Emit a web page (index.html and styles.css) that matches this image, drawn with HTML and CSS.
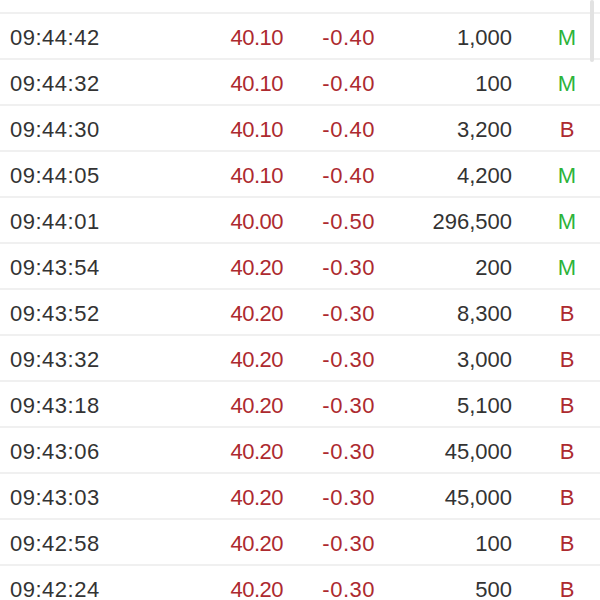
FILE: index.html
```html
<!DOCTYPE html>
<html>
<head>
<meta charset="utf-8">
<link rel="stylesheet" href="styles.css">
</head>
<body>
<div class="list">
  <div class="spacer"></div>
  <div class="row"><span class="time">09:44:42</span><span class="price">40.10</span><span class="chg">-0.40</span><span class="vol">1,000</span><span class="type m">M</span></div>
  <div class="row"><span class="time">09:44:32</span><span class="price">40.10</span><span class="chg">-0.40</span><span class="vol">100</span><span class="type m">M</span></div>
  <div class="row"><span class="time">09:44:30</span><span class="price">40.10</span><span class="chg">-0.40</span><span class="vol">3,200</span><span class="type b">B</span></div>
  <div class="row"><span class="time">09:44:05</span><span class="price">40.10</span><span class="chg">-0.40</span><span class="vol">4,200</span><span class="type m">M</span></div>
  <div class="row"><span class="time">09:44:01</span><span class="price">40.00</span><span class="chg">-0.50</span><span class="vol">296,500</span><span class="type m">M</span></div>
  <div class="row"><span class="time">09:43:54</span><span class="price">40.20</span><span class="chg">-0.30</span><span class="vol">200</span><span class="type m">M</span></div>
  <div class="row"><span class="time">09:43:52</span><span class="price">40.20</span><span class="chg">-0.30</span><span class="vol">8,300</span><span class="type b">B</span></div>
  <div class="row"><span class="time">09:43:32</span><span class="price">40.20</span><span class="chg">-0.30</span><span class="vol">3,000</span><span class="type b">B</span></div>
  <div class="row"><span class="time">09:43:18</span><span class="price">40.20</span><span class="chg">-0.30</span><span class="vol">5,100</span><span class="type b">B</span></div>
  <div class="row"><span class="time">09:43:06</span><span class="price">40.20</span><span class="chg">-0.30</span><span class="vol">45,000</span><span class="type b">B</span></div>
  <div class="row"><span class="time">09:43:03</span><span class="price">40.20</span><span class="chg">-0.30</span><span class="vol">45,000</span><span class="type b">B</span></div>
  <div class="row"><span class="time">09:42:58</span><span class="price">40.20</span><span class="chg">-0.30</span><span class="vol">100</span><span class="type b">B</span></div>
  <div class="row"><span class="time">09:42:24</span><span class="price">40.20</span><span class="chg">-0.30</span><span class="vol">500</span><span class="type b">B</span></div>
</div>
<div class="scrollbar"></div>
</body>
</html>
```
FILE: styles.css
```css
html, body {
  margin: 0;
  padding: 0;
  background: #fff;
  overflow: hidden;
}
body {
  font-family: "Liberation Sans", Arial, sans-serif;
  font-size: 22px;
  color: #333;
  width: 600px;
  height: 600px;
  position: relative;
}
.spacer {
  height: 12px;
  border-bottom: 2px solid #f0f0f0;
}
.row {
  display: grid;
  grid-template-columns: 150px 123px 92px 137px 88px;
  box-sizing: border-box;
  padding-left: 10px;
  padding-top: 3px;
  height: 46px;
  align-items: center;
  border-bottom: 2px solid #f0f0f0;
}
.time {
  letter-spacing: 0.5px;
}
.price {
  text-align: right;
  color: #ad2a2f;
  letter-spacing: -0.5px;
}
.chg {
  text-align: right;
  color: #ad2a2f;
  letter-spacing: 0.5px;
}
.vol {
  text-align: right;
}
.type {
  text-align: center;
  padding-left: 22px;
}
.type.m { color: #2db33a; }
.type.b { color: #ad2a2f; }
.scrollbar {
  position: absolute;
  top: 0;
  left: 590px;
  width: 4px;
  height: 62px;
  background: #e2e2e2;
  border-radius: 2px;
}
```
